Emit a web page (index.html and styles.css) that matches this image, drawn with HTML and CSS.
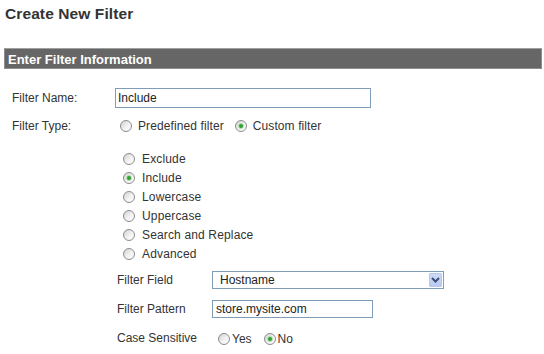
FILE: index.html
```html
<!DOCTYPE html>
<html>
<head>
<meta charset="utf-8">
<link rel="stylesheet" href="styles.css">
</head>
<body>
<h1 class="title">Create New Filter</h1>
<div class="bar">Enter Filter Information</div>
<div class="form">
  <div class="row row-name">
    <div class="label">Filter Name:</div>
    <div class="field"><div class="input input-name">Include</div></div>
  </div>
  <div class="row row-type">
    <div class="label">Filter Type:</div>
    <div class="field type-choices">
      <span class="choice"><span class="radio"></span><span>Predefined filter</span></span>
      <span class="choice"><span class="radio on"></span><span>Custom filter</span></span>
    </div>
  </div>
  <div class="row">
    <div></div>
    <div class="field">
      <ul class="options">
        <li><span class="radio"></span>Exclude</li>
        <li><span class="radio on"></span>Include</li>
        <li><span class="radio"></span>Lowercase</li>
        <li><span class="radio"></span>Uppercase</li>
        <li><span class="radio"></span>Search and Replace</li>
        <li><span class="radio"></span>Advanced</li>
      </ul>
      <div class="sub">
        <div class="subrow sr1">
          <div class="sublabel">Filter Field</div>
          <div class="select"><span class="sel-text">Hostname</span><span class="sel-btn"><svg width="9" height="6" viewBox="0 0 9 6"><path d="M1 1 L4.5 4.5 L8 1" fill="none" stroke="#3c4f78" stroke-width="2"/></svg></span></div>
        </div>
        <div class="subrow sr2">
          <div class="sublabel">Filter Pattern</div>
          <div class="input input-pattern">store.mysite.com</div>
        </div>
        <div class="subrow sr3">
          <div class="sublabel">Case Sensitive</div>
          <div class="yesno">
            <span class="choice2"><span class="radio"></span><span>Yes</span></span>
            <span class="choice2"><span class="radio on"></span><span>No</span></span>
          </div>
        </div>
      </div>
    </div>
  </div>
</div>
</body>
</html>
```
FILE: styles.css
```css
* { box-sizing: border-box; }
body {
  margin: 0;
  background: #fff;
  color: #333;
  font-family: "Liberation Sans", Arial, sans-serif;
  font-size: 12px;
}
.title {
  margin: 0;
  padding: 4px 0 0 5px;
  font-size: 15.5px;
  line-height: 20px;
  font-weight: bold;
  color: #333;
  letter-spacing: 0.1px;
}
.bar {
  margin: 24px 2px 0 4px;
  height: 21px;
  padding: 1px 0 0 3px;
  background: #666;
  border: 1px solid #8e8e8e;
  border-top-color: #a0a0a0;
  color: #fff;
  font-size: 13px;
  font-weight: bold;
  line-height: 19px;
}
.form {
  padding-left: 12px;
  margin-top: 15px;
}
.row {
  display: grid;
  grid-template-columns: 103px 1fr;
  align-items: center;
}
.row-name, .row-type { height: 28px; }
.label { line-height: 14px; }
.input {
  height: 20px;
  border: 1px solid #7f9db9;
  background: #fff;
  color: #222;
  line-height: 18px;
  padding: 0 2px;
}
.input-name { width: 256px; }
.radio {
  display: inline-block;
  position: relative;
  width: 12px;
  height: 12px;
  border: 1px solid #8c8c8c;
  border-radius: 50%;
  background: linear-gradient(135deg, #d2d2d2 0%, #f2f2f2 55%, #fff 100%);
  flex: none;
}
.radio.on::after {
  content: "";
  position: absolute;
  left: 3px;
  top: 3px;
  width: 4px;
  height: 4px;
  border-radius: 50%;
  background: #30a030;
  box-shadow: 0 0 0 1px #b4e0b4;
}
.type-choices {
  display: flex;
  align-items: center;
  padding-left: 5px;
}
.choice {
  display: inline-flex;
  align-items: center;
  gap: 6px;
  margin-right: 11px;
  line-height: 14px;
  letter-spacing: 0.1px;
}
.options {
  list-style: none;
  margin: 9px 0 0 0;
  padding: 0 0 0 8px;
}
.options li {
  height: 19px;
  display: flex;
  align-items: center;
  gap: 7px;
  line-height: 14px;
  letter-spacing: 0.15px;
}
.sub {
  margin-top: 3px;
  padding-left: 2px;
}
.subrow {
  display: grid;
  grid-template-columns: 95px 1fr;
  align-items: center;
}
.sr1 { height: 28px; }
.sr2 { height: 29px; }
.sr3 { height: 30px; }
.sublabel { line-height: 14px; }
.select {
  width: 232px;
  height: 18px;
  border: 1px solid #7f9db9;
  background: #fff;
  display: flex;
  align-items: center;
  padding-left: 7px;
  color: #222;
}
.sel-text { flex: 1; line-height: 14px; }
.sel-btn {
  width: 13px;
  height: 14px;
  margin-right: 1px;
  background: linear-gradient(#cddaf7, #b9cbf2);
  border: 1px solid #b7c8ef;
  border-radius: 1px;
  display: flex;
  align-items: center;
  justify-content: center;
}
.input-pattern {
  width: 161px;
  height: 18px;
  line-height: 16px;
  padding: 0 3px;
}
.yesno {
  display: flex;
  align-items: center;
  padding-left: 6px;
  margin-top: 2px;
}
.choice2 {
  display: inline-flex;
  align-items: center;
  gap: 2px;
  margin-right: 12px;
  line-height: 14px;
}
```
